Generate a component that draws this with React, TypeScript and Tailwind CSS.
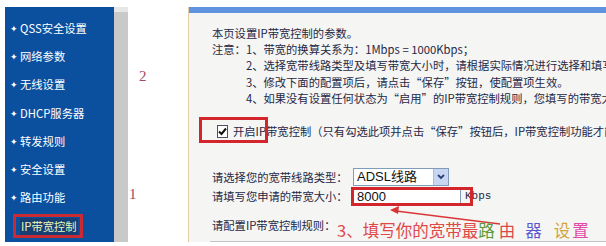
import React from "react";

const menu = [
  "QSS安全设置",
  "网络参数",
  "无线设置",
  "DHCP服务器",
  "转发规则",
  "安全设置",
  "路由功能",
];

const cjk = { fontFamily: '"Noto Sans CJK SC", "Liberation Sans", sans-serif' };

export default function App() {
  return (
    <div
      className="relative w-[606px] h-[246px] bg-white overflow-hidden text-[11.3px]"
      style={cjk}
    >
      <div className="flex pt-[7px] h-[242px]">
        {/* sidebar */}
        <div className="ml-[5px] w-[109px] bg-[#0b4f9f] pt-[7px] text-white">
          {menu.map((m) => (
            <div key={m} className="h-[28.3px] flex items-center pl-[5px]">
              <span className="w-[10px] text-[9px] leading-none">✦</span>
              <span className="ml-[0px]">{m}</span>
            </div>
          ))}
          <div className="h-[28.3px] flex items-center pl-[5px]">
            <span className="w-[10px] text-[8px] leading-none">•</span>
            <span className="bg-[#173f73] text-[#eef5b8] px-[1px]">IP带宽控制</span>
          </div>
        </div>
        <div className="w-[14px] flex flex-col">
          <div className="h-[5px] bg-[#e6e6e6]" />
          <div className="flex-1 bg-[#c9c9c9]" />
        </div>

        {/* gap column with step numbers */}
        <div className="relative w-[60px]">
          <span
            className="absolute left-[11px] top-[58px] text-[15px] text-[#a54a5c]"
            style={{ fontFamily: '"Liberation Serif", serif' }}
          >
            2
          </span>
          <span
            className="absolute left-[1px] top-[176px] text-[15px] text-[#a54a5c]"
            style={{ fontFamily: '"Liberation Serif", serif' }}
          >
            1
          </span>
        </div>

        {/* main panel */}
        <div className="flex-1 flex flex-col border-l border-[#e3cfa6] bg-[#f5f5f4] overflow-hidden whitespace-nowrap text-[#1f2844]">
          <div className="h-[6px] bg-[#5f93e0]" />
          <div className="mt-[12px] pl-[23px] leading-[16.25px]">
            <div>本页设置IP带宽控制的参数。</div>
            <div>注意：1、带宽的换算关系为：1Mbps = 1000Kbps；</div>
            <div className="pl-[3em]">2、选择宽带线路类型及填写带宽大小时，请根据实际情况进行选择和填写。</div>
            <div className="pl-[3em]">3、修改下面的配置项后，请点击“保存”按钮，使配置项生效。</div>
            <div className="pl-[3em]">4、如果没有设置任何状态为“启用”的IP带宽控制规则，您填写的带宽大小将不起作用。</div>
          </div>
          <div className="mt-[12px] h-[26px] flex items-center pl-[28px]">
            <span className="w-[13px] h-[13px] border border-[#4a5060] bg-white flex items-center justify-center">
              <svg width="9" height="9" viewBox="0 0 9 9">
                <path d="M1 4.5 L3.5 7 L8 1.5" stroke="#111" strokeWidth="2" fill="none" />
              </svg>
            </span>
            <span className="ml-[5px]">开启IP带宽控制（只有勾选此项并点击“保存”按钮后，IP带宽控制功能才能生效）</span>
          </div>
          <div className="mt-[24px] h-[18px] flex items-center pl-[23px]">
            <span className="w-[141px]">请选择您的宽带线路类型：</span>
            <div className="w-[96px] h-[18px] border border-[#7f9db9] bg-white flex items-center">
              <span
                className="flex-1 pl-[3px] text-[13px] text-[#111]"
                style={{ fontFamily: '"Liberation Sans", "Noto Sans CJK SC", sans-serif' }}
              >
                ADSL线路
              </span>
              <span className="w-[15px] h-[16px] bg-[#c7d6f3] border-l border-[#a9bde3] flex items-center justify-center">
                <svg width="8" height="6" viewBox="0 0 8 6">
                  <path d="M1 1 L4 4 L7 1" stroke="#2b3f78" strokeWidth="1.8" fill="none" />
                </svg>
              </span>
            </div>
          </div>
          <div className="mt-[2px] h-[17px] flex items-center pl-[23px]">
            <span className="w-[141px]">请填写您申请的带宽大小：</span>
            <div
              className="w-[108px] h-[17px] border border-[#7f9db9] bg-white pl-[3px] text-[13px] leading-[15px] text-[#111]"
              style={{ fontFamily: '"Liberation Sans", sans-serif' }}
            >
              8000
            </div>
            <span
              className="ml-[4px] text-[11px]"
              style={{ fontFamily: '"Liberation Mono", monospace' }}
            >
              Kbps
            </span>
          </div>
          <div className="mt-[12px] h-[16px] flex items-center pl-[23px]">请配置IP带宽控制规则：</div>
          <div className="mt-[8px] ml-[21px] h-px bg-[#c4c4c4]" />
        </div>
      </div>

      {/* annotations */}
      <div className="absolute left-[13px] top-[214px] w-[70px] h-[24px] border-[3px] border-[#c92a33]" />
      <div className="absolute left-[199px] top-[117px] w-[69px] h-[26px] border-[3px] border-[#d3262c]" />
      <div className="absolute left-[351px] top-[187px] w-[122px] h-[19px] border-[3px] border-[#d3262c]" />
      <svg className="absolute left-0 top-0" width="606" height="246">
        <line x1="500" y1="224" x2="396" y2="211" stroke="#d83636" strokeWidth="1.3" />
        <path d="M390 210 L399 206 L398 214 Z" fill="#d83636" />
      </svg>
      <div className="absolute left-[337px] top-[219px] text-[16.5px] leading-[22px] whitespace-nowrap">
        <span className="text-[#e04848]">3、填写你的宽带最</span>
        <span className="text-[#5e9a3c]">路</span>
        <span className="text-[#d84a4a] ml-[4px]">由</span>
        <span className="text-[#5a55d2] ml-[10px]">器</span>
        <span className="text-[#d3a43a] ml-[12px]">设</span>
        <span className="text-[#e04aa8] ml-[2px]">置</span>
      </div>
    </div>
  );
}
